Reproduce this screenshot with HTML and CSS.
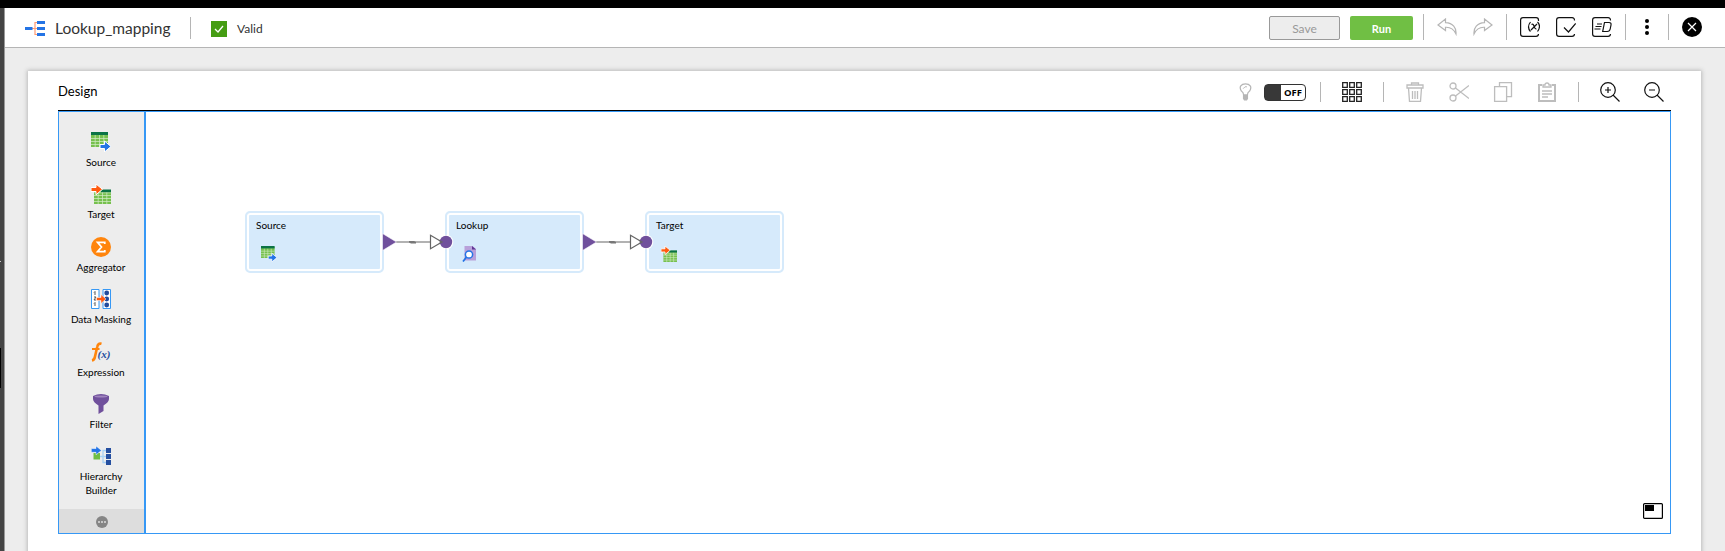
FILE: index.html
```html
<!DOCTYPE html>
<html lang="en">
<head>
<meta charset="utf-8">
<title>Lookup_mapping</title>
<link rel="stylesheet" href="styles.css">
</head>
<body>
<svg width="0" height="0" class="defs">
  <symbol id="source" viewBox="0 0 20 20">
    <path fill="#76c04e" d="M0 1h17v14H0z"/>
    <path stroke="#d5edc9" stroke-width=".7" d="M0 6.500h17M0 9.500h17M0 12.500h17M4.200 3v12M8.500 3v12M12.800 3v12"/><path fill="#0b7345" d="M0 0h17v3H0z"/>
    <path fill="#2474e5" stroke="#fff" stroke-width="1" d="M9 12.500h4.500V9l6.500 5.500-6.500 5.500v-3.500H9z"/>
  </symbol>
  <symbol id="target" viewBox="0 0 20 20">
    <path fill="#76c04e" d="M3 6h17v14H3z"/>
    <path stroke="#d5edc9" stroke-width=".7" d="M3 8.800h17M3 11.500h17M3 14.500h17M3 17.500h17M7.200 8v12M11.500 8v12M15.800 8v12"/><path fill="#0b7345" d="M10 5.500h10v2.700H10z"/>
    <path fill="#ff5b10" stroke="#fff" stroke-width="1" d="M0 3.500h5V0l6.500 5.300L5 10.800V7.500H0z"/>
  </symbol>
</svg>
<div class="topbar"></div>
<div class="app">
  <div class="rail"><i></i><b></b></div>
  <div class="main">
    <header class="header">
      <svg class="logo" width="20" height="16" viewBox="0 0 20 16"><path fill="none" stroke="#ff9b73" stroke-width="1.200" d="M7 7.500h5M12 1.500h-2v12h2"/><path fill="#2474e5" d="M0 6h7.500v3H0zM12 0h8v3h-8zM12 6h8v3h-8zM12 12h8v3h-8z"/></svg>
      <h1 class="title">Lookup_mapping</h1>
      <span class="sep sep-title"></span>
      <svg class="valid-icon" width="16" height="16"><path fill="#459d13" d="M0 0h16v16H0z"/><path d="M4 8l3 3 5-6" fill="none" stroke="#fff" stroke-width="1.300"/></svg>
      <span class="valid">Valid</span>
      <div class="actions">
        <button class="btn save">Save</button><button class="btn run">Run</button>
        <span class="sep"></span>
        <svg class="undo" width="20" height="18" viewBox="0 0 20 18"><path id="undo" fill="none" stroke="#b5b5b5" stroke-width="1.200" d="M8.500 1L1 7l7.500 5.500V9.300c4.500-.3 8 1.500 10.500 6.700.5-6-3-11-10.500-11.300z"/></svg>
        <svg class="redo" width="20" height="18" viewBox="0 0 20 18"><use href="#undo" transform="translate(20 0) scale(-1 1)"/></svg>
        <span class="sep sep-b"></span>
        <svg class="tool" width="20" height="20" viewBox="0 0 20 20"><path class="line" d="M18.500 4V3q0-2.400-2.400-2.400H3Q.6.600.6 3v14q0 2.400 2.400 2.400h13q2.400 0 2.500-2.400M10.500 5q-4 5 0 9.500M17.500 5q4 4 0 9.500M11.500 7.500c3-2 2 5 5 4.500M17 7l-6 6"/></svg>
        <svg class="tool" width="20" height="20" viewBox="0 0 20 20"><path class="line" d="M18.500 3.500Q18.500.6 16 .6H3Q.6.600.6 3v14q0 2.400 2.400 2.400h13q2.400 0 2.500-2.400M8 10.500l4.500 4.500 7.200-8.500"/></svg>
        <svg class="tool" width="20" height="20" viewBox="0 0 20 20"><path class="line" d="M18.500 3.500Q18.500.6 16 .6H3Q.6.600.6 3v14q0 2.400 2.400 2.400h13q2.400 0 2.500-2.400M5 7h5M3.500 9.500h6M2.500 12h6M12.500 5.500h4.500q2.500 0 2 2.500l-.8 4q-.5 2.500-3 2.500h-4.500z"/></svg>
        <span class="sep sep-c"></span>
        <svg class="more" width="6" height="18"><circle cx="3" cy="3" r="2"/><circle cx="3" cy="9" r="2"/><circle cx="3" cy="15" r="2"/></svg>
        <span class="sep sep-d"></span>
        <svg width="20" height="20"><circle cx="10" cy="10" r="10"/><path stroke="#fff" stroke-width="1.200" d="M6 6l8 8M14 6l-8 8"/></svg>
      </div>
    </header>
    <section class="card">
      <div class="toolbar">
        <h2 class="design">Design</h2>
        <div class="tools">
          <svg class="bulb" width="13" height="20" viewBox="0 0 13 20"><path fill="none" stroke="#b5b5b5" stroke-width="1.300" d="M4.500 12.500Q4.500 10 2.200 8.500C-.8 4 2 1 6.500 1s7.300 3 4.300 7.500Q8.500 10 8.500 12.500z"/><path fill="#b5b5b5" d="M3.800 12.500h5.400v4l-1.200 2H5l-1.200-2z"/><path stroke="#b5b5b5" d="M4 6q2-3 4-2" fill="none"/></svg>
          <div class="toggle"><span>OFF</span></div>
          <span class="sep short s1"></span>
          <svg class="grid" width="20" height="20"><path fill="none" stroke="#222" stroke-width="1.300" d="M.7.700h4.600v4.600H.7zM7.700.700h4.600v4.600H7.700zM14.700.700h4.600v4.600h-4.600zM.7 7.700h4.600v4.600H.7zM7.700 7.700h4.600v4.600H7.700zM14.700 7.700h4.600v4.600h-4.600zM.7 14.700h4.600v4.600H.7zM7.700 14.700h4.600v4.600H7.700zM14.700 14.700h4.600v4.600h-4.600z"/></svg>
          <span class="sep short s2"></span>
          <svg class="icon" width="20" height="20"><path class="gray" d="M6.500 3V1h7v2M2 3h16v3H2zM3.500 6l1 13.300h11L16.500 6M7.500 9v8M10 9v8M12.500 9v8"/></svg>
          <svg class="icon" width="20" height="20"><circle class="gray" cx="4" cy="4" r="3"/><circle class="gray" cx="4" cy="16" r="3"/><path class="gray" d="M6.500 6L20 16.500M6.500 14L20 3.500"/></svg>
          <svg class="icon" width="20" height="20"><path class="gray" d="M1.600 4.600h12v14.800h-12zM6.500 4V.6h12v14H14"/></svg>
          <svg class="icon" width="20" height="20"><path class="gray thick" d="M5 3H2v16h16V3h-3"/><path class="gray" d="M6 5V3h2q0-2 2-2t2 2h2v2zM5 9h10M5 12h10M5 15h6"/></svg>
          <span class="sep short s3"></span>
          <svg class="zoom" width="20" height="20"><circle class="line" cx="8" cy="8" r="7.300"/><path class="line" d="M13 13l6.500 6.500M5 8h6M8 5v6"/></svg>
          <svg width="20" height="20"><circle class="line" cx="8" cy="8" r="7.300"/><path class="line" d="M13 13l6.500 6.500M5 8h6"/></svg>
        </div>
      </div>
      <div class="workspace">
        <aside class="palette">
          <div class="items">
            <div class="item"><svg width="20" height="20"><use href="#source"/></svg><span>Source</span></div>
            <div class="item"><svg width="20" height="20"><use href="#target"/></svg><span>Target</span></div>
            <div class="item"><svg width="20" height="20"><circle cx="10" cy="10" r="10" fill="#ff850d"/><path fill="none" stroke="#fff" stroke-width="1.700" d="M13.800 7V5.300H6.500l4 4.700-4 4.700h7.300V13"/></svg><span>Aggregator</span></div>
            <div class="item"><svg width="20" height="20"><path fill="#fff" stroke="#3698f5" d="M.5.500h7.500v19H.5zM12 .5h7.500v19H12z"/><g fill="#214b9c"><circle cx="15.700" cy="4" r="2.400"/><circle cx="15.700" cy="10" r="2.400"/><circle cx="15.700" cy="16" r="2.400"/></g><path stroke="#555" fill="none" d="M3 3.500l1-1V6M3 8h2l-2 3h2M3 14.500l1-1V17"/><path fill="#ff5b10" stroke="#fff" stroke-width=".5" d="M5.500 8.500H10V5.500l5 4.500-5 4.500v-3H5.500z"/></svg><span>Data Masking</span></div>
            <div class="item"><svg width="20" height="20"><path fill="none" stroke="#ff850d" stroke-width="2.600" d="M10.500 1.800Q7 .8 6.200 5L4 14.500Q3.500 18 1 18.500"/><path stroke="#ff850d" stroke-width="2" d="M1 7h7.500"/><text x="6.500" y="16" class="fx-arg" textLength="13" lengthAdjust="spacingAndGlyphs">(x)</text></svg><span>Expression</span></div>
            <div class="item"><svg width="20" height="20"><path fill="#70509c" d="M2 2q8-4 16 0v3q0 3-5.500 6.500V17L7.500 20v-8.500Q2 8 2 5z"/><ellipse cx="10" cy="2.500" rx="6.500" ry="1" fill="#9f84bd"/></svg><span>Filter</span></div>
            <div class="item"><svg width="20" height="20"><path stroke="#a9d2f5" stroke-width="1.300" fill="none" d="M8 10.500h7M15 4.500h-3v12h3"/><path fill="#6fbe44" d="M2.500 7h6.500v6.500H2.500z"/><path fill="#254fa0" d="M15 2h5v5h-5zM15 8h5v5h-5zM15 14h5v5h-5z"/><path fill="#2474e5" stroke="#fff" stroke-width=".5" d="M.3 2.500H5V0l5.500 4.400L5 8.800V6.300H.3z"/></svg><span>Hierarchy<br>Builder</span></div>
          </div>
          <div class="palette-more"><svg width="12" height="12"><circle cx="6" cy="6" r="6" fill="#858585"/><g fill="#ddd"><circle cx="3" cy="6" r="1"/><circle cx="6" cy="6" r="1"/><circle cx="9" cy="6" r="1"/></g></svg></div>
        </aside>
        <div class="canvas">
          <div class="node n-source"><span>Source</span><svg class="glyph" width="16" height="16"><use href="#source"/></svg></div>
          <div class="node n-lookup"><span>Lookup</span><svg class="glyph" width="16" height="16"><path fill="#b8a0da" d="M3.500 0h8L15 3v11.500H3.500z"/><path fill="#5f3594" d="M11 0l4 3.500h-4z"/><circle cx="8" cy="8.500" r="3.600" fill="#fff" stroke="#2474e5" stroke-width="1.500"/><path stroke="#2474e5" stroke-width="1.800" d="M5.500 11L2 15.500"/></svg></div>
          <div class="node n-target"><span>Target</span><svg class="glyph" width="16" height="16"><use href="#target"/></svg></div>
          <svg class="link link-a" width="76" height="20"><g id="link"><path fill="none" stroke="#999" stroke-width="1.600" d="M12 10h37"/><path fill="#777" d="M27 9h5l2 1v1.500h-5l-2-1z"/><path fill="#70509c" stroke="#fff" stroke-width=".6" d="M.5 1.500L14.500 10 .5 18.500z"/><circle cx="64" cy="10" r="7.300" fill="#fff"/><path fill="#fff" stroke="#666" stroke-width="1.200" d="M48.500 3.200L60 10l-11.500 6.800z"/><circle cx="64" cy="10" r="6.200" fill="#70509c"/><path fill="none" stroke="#666" stroke-width="1.200" d="M57 8.300L60 10l-3 1.800"/></g></svg>
          <svg class="link link-b" width="76" height="20"><use href="#link"/></svg>
          <svg class="minimap" width="20" height="16"><rect x=".6" y=".6" width="18.800" height="14.800" rx="1" fill="#fff" stroke="#000" stroke-width="1.200"/><path d="M2 2h9v6H2z"/></svg>
        </div>
      </div>
    </section>
  </div>
</div>
</body>
</html>
```
FILE: styles.css
```css
* { box-sizing: border-box; }
body { margin: 0; height: 551px; overflow: hidden; font-family: Lato, "Liberation Sans", sans-serif; color: #000; }
svg { display: block; flex: none; }
.defs { position: absolute; }
.topbar { height: 8px; background: #000; }
.app { display: flex; height: 543px; }
.rail { width: 5px; background: #444; border-right: 1px solid #999; padding-top: 253px; }
.rail i { display: block; width: 1px; height: 1px; background: #ccc; }
.rail b { display: block; width: 1px; height: 40px; margin-top: 86px; background: #000; }
.main { flex: 1; background: #ededed; }
.header { height: 40px; background: #fff; border-bottom: 1px solid #b5b5b5; display: flex; align-items: center; padding: 0 23px 2px 20px; }
.title { margin: 2px 0 0 10px; width: 116px; font-size: 15.5px; font-weight: 400; color: #333; white-space: nowrap; line-height: 20px; }
.logo { margin-top: 4px; }
.sep { width: 1px; height: 26px; background: #b5b5b5; flex: none; }
.sep-title { margin-left: 19px; height: 22px; margin-top: 3px; }
.valid-icon { margin: 5px 10px 0 20px; }
.valid { font-size: 12px; color: #333; padding-top: 4px; }
.actions { margin-left: auto; display: flex; align-items: center; }
.actions .sep { margin-left: 10px; }
.btn { height: 24px; padding: 0; font: 12px Lato, sans-serif; border-radius: 2px; margin-top: 3px; }
.save { width: 71px; color: #999; background: #ededed; border: 1px solid #999; }
.run { width: 63px; margin-left: 10px; color: #fff; background: #70bf44; border: 0; font-weight: 700; font-size: 11px; }
.undo { margin-left: 13px; }
.redo { margin-left: 16px; }
.actions .sep-b { margin-left: 13px; margin-right: -3px; }
.tool { margin-left: 16px; }
.actions .sep-c { margin-left: 13px; }
.more { margin-left: 18px; }
.actions .sep-d { margin: 0 13px 0 18px; }
.line { fill: none; stroke: #111; stroke-width: 1.2; }
.gray { fill: none; stroke: #bdbdbd; stroke-width: 1.3; }
.thick { stroke-width: 2; }
.card { width: 1673px; height: 500px; margin: 23px 0 0 23px; padding: 0 30px; background: #fff; box-shadow: 0 0 4px 1px #bbb; }
.toolbar { height: 40px; border-bottom: 1px solid #000; display: flex; align-items: center; justify-content: space-between; padding: 2px 7px 0 0; }
.design { margin: 0 0 2px; font-size: 13px; font-weight: 400; }
.tools { display: flex; align-items: center; }
.short { height: 20px; }
.bulb { margin-right: 12px; padding-top: 1px; }
.toggle { width: 42px; height: 17px; margin-top: 2px; border: 1px solid #333; border-radius: 4px; background: linear-gradient(90deg, #383838 16px, #fff 16px); text-align: right; padding-right: 3px; font: 700 9.5px/15px "Open Sans", sans-serif; }
.s1 { margin-left: 14px; }
.grid { margin-left: 21px; }
.s2 { margin: 0 21px; }
.icon { margin-right: 24px; }
.s3 { margin: 0 21px 0 -3px; }
.zoom { margin-right: 24px; }
.workspace { height: 423px; border: 1px solid #3698f5; display: flex; }
.palette { width: 87px; background: #ededed; border-right: 2px solid #3698f5; display: flex; flex-direction: column; }
.items { height: 397px; padding-top: 20px; }
.item { height: 52.4px; display: flex; flex-direction: column; align-items: center; font-size: 10px; line-height: 14px; text-align: center; white-space: nowrap; padding-right: 1px; }
.item svg { margin-bottom: 3px; }
.fx-arg { font: italic 700 11px "Liberation Serif", serif; fill: #254fa0; }
.palette-more { flex: 1; background: #ddd; display: flex; align-items: center; justify-content: center; padding: 1px 0 0 1px; }
.canvas { flex: 1; position: relative; }
.node { position: absolute; top: 99px; width: 139px; height: 62px; border: 2px solid #d6eafb; border-radius: 5px; background: #d6eafb; box-shadow: inset 0 0 0 2px #fff; padding: 5px 9px; font-size: 10px; line-height: 14px; }
.glyph { margin: 14px 0 0 5px; }
.n-source { left: 99px; }
.n-lookup { left: 299px; }
.n-target { left: 499px; }
.link { position: absolute; top: 120px; }
.link-a { left: 236px; }
.link-b { left: 436px; }
.minimap { position: absolute; right: 7px; bottom: 14px; }
```
